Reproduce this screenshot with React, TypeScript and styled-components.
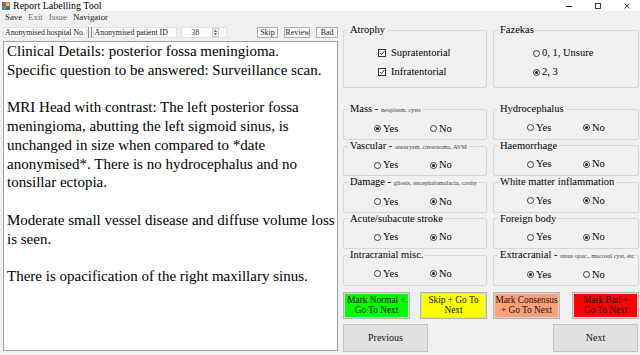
import React from 'react'
import styled, { createGlobalStyle } from 'styled-components'

const GlobalStyle = createGlobalStyle`
  html, body {
    margin: 0;
    padding: 0;
    background: #f0f0f0;
  }
  body {
    font-family: "Liberation Serif", "Times New Roman", serif;
    color: #000;
  }
`

const Window = styled.div`
  width: 640px;
  height: 355px;
  background: #f0f0f0;
  display: flex;
  flex-direction: column;
  overflow: hidden;
`

const TitleBar = styled.div`
  height: 11px;
  background: #fff;
  display: flex;
  align-items: center;
  padding-left: 2px;
`

const Title = styled.span`
  margin-left: 3px;
  font-size: 10px;
  line-height: 11px;
`

const Controls = styled.div`
  margin-left: auto;
  padding-right: 10px;
  display: flex;
  align-items: center;
  gap: 23px;
`

const MenuBar = styled.div`
  height: 12px;
  display: flex;
  align-items: center;
  gap: 6px;
  padding-left: 5px;
  font-size: 8.8px;
`

const MenuItem = styled.span<{ $muted?: boolean }>`
  color: ${p => (p.$muted ? '#6a6a6a' : '#222')};
`

const Body = styled.div`
  flex: 1;
  display: flex;
  min-height: 0;
`

const LeftColumn = styled.div`
  width: 335px;
  margin-left: 3px;
  display: flex;
  flex-direction: column;
`

const Toolbar = styled.div`
  height: 17px;
  box-sizing: border-box;
  padding-top: 4px;
  display: flex;
  align-items: flex-start;
`

const Field = styled.div<{ $w: number }>`
  width: ${p => p.$w}px;
  height: 11px;
  box-sizing: border-box;
  background: #fff;
  border: 1px solid #e2e2e2;
  font-size: 7.8px;
  line-height: 9px;
  padding-left: 1px;
  white-space: nowrap;
  overflow: hidden;
  color: #111;
`

const Divider = styled.div`
  width: 4px;
  height: 11px;
  box-sizing: border-box;
  border-left: 1px solid #8a8a8a;
  border-right: 1px solid #8a8a8a;
  margin: 0 1px;
`

const Spinner = styled.div`
  width: 46px;
  height: 11px;
  box-sizing: border-box;
  margin-left: 4px;
  background: #fff;
  border: 1px solid #e2e2e2;
  display: flex;
  align-items: center;
  font-size: 8px;
  padding-left: 9px;
  color: #333;
`

const SpinArrows = styled.div`
  margin-left: auto;
  margin-right: 7px;
  width: 7px;
  height: 9px;
  box-sizing: border-box;
  border: 1px solid #c8c8c8;
  background: #f4f4f4;
  display: flex;
`

const ToolButton = styled.div<{ $w: number; $gap: number }>`
  width: ${p => p.$w}px;
  margin-left: ${p => p.$gap}px;
  height: 11px;
  box-sizing: border-box;
  background: #fdfdfd;
  border: 1px solid #adadad;
  font-size: 8px;
  line-height: 9px;
  text-align: center;
  color: #222;
`

const ReportText = styled.div`
  margin-top: 1px;
  height: 310px;
  box-sizing: border-box;
  background: #fff;
  border: 1px solid #a0a0a0;
  padding: 0 1px 0 3px;
  font-size: 15px;
  line-height: 18.75px;
  white-space: pre-wrap;
  overflow: hidden;
`

const RightColumn = styled.div`
  width: 296px;
  margin-left: 5px;
  margin-top: 1px;
  display: flex;
  flex-direction: column;
`

const PairGrid = styled.div`
  display: grid;
  grid-template-columns: 144px 146px;
  column-gap: 6px;
`

const TopGrid = styled(PairGrid)`
  height: 64px;
`

const QuestionGrid = styled(PairGrid)`
  margin-top: 15px;
  grid-auto-rows: 36.5px;
`

const Group = styled.fieldset`
  margin: 0;
  padding: 0;
  min-width: 0;
  box-sizing: border-box;
  border: 1px solid #d6d6d6;
  border-radius: 2px;
`

const Legend = styled.legend`
  margin-left: 4px;
  padding: 0 2px;
  font-size: 10.5px;
  line-height: 12px;
  white-space: nowrap;
`

const Hint = styled.span`
  font-size: 6.3px;
  color: #444;
`

const Stack = styled.div<{ $indent: number }>`
  display: flex;
  flex-direction: column;
  gap: 7px;
  padding-left: ${p => p.$indent}px;
  margin-top: 11px;
`

const OptionRow = styled.div<{ $indent: number }>`
  display: flex;
  padding-left: ${p => p.$indent}px;
  margin-top: 6.5px;
`

const Choice = styled.div<{ $w?: number; $gap: number }>`
  display: flex;
  align-items: center;
  gap: ${p => p.$gap}px;
  width: ${p => (p.$w ? `${p.$w}px` : 'auto')};
  font-size: 10.5px;
  line-height: 12px;
  white-space: nowrap;
`

const Mark = styled.span<{ $round?: boolean; $size: number }>`
  width: ${p => p.$size}px;
  height: ${p => p.$size}px;
  box-sizing: border-box;
  flex: none;
  border: 1px solid #333;
  border-radius: ${p => (p.$round ? '50%' : '0')};
  background: #fff;
  display: inline-flex;
  align-items: center;
  justify-content: center;
`

const Dot = styled.span`
  width: 3px;
  height: 3px;
  border-radius: 50%;
  background: #1a1a1a;
`

const ActionRow = styled(PairGrid)`
  margin-top: 6px;
  height: 27px;
`

const ActionPair = styled.div`
  display: flex;
  justify-content: space-between;
`

const ActionButton = styled.div<{ $bg: string }>`
  width: 67px;
  height: 27px;
  box-sizing: border-box;
  background: ${p => p.$bg};
  border: 1px solid #b4b4b4;
  box-shadow: inset 0 0 0 1px #d4d4d4;
  font-size: 9.3px;
  line-height: 10px;
  text-align: center;
  display: flex;
  align-items: center;
  justify-content: center;
  white-space: pre;
  color: #111;
`

const NavRow = styled.div`
  margin-top: 5px;
  padding-right: 1px;
  display: flex;
  justify-content: space-between;
`

const NavButton = styled.div`
  width: 85px;
  height: 28.5px;
  box-sizing: border-box;
  background: #e1e1e1;
  border: 1px solid #c2c2c2;
  font-size: 10px;
  display: flex;
  align-items: center;
  justify-content: center;
  color: #111;
`

function AppIcon() {
  return (
    <svg width="8" height="8" viewBox="0 0 8 8">
      <rect x="0" y="0" width="8" height="8" fill="#3b6fc4" />
      <rect x="0.5" y="0.5" width="3.5" height="3.5" fill="#e0403a" />
      <rect x="4" y="0.5" width="3.5" height="3.5" fill="#f2c531" />
      <rect x="0.5" y="4" width="3.5" height="3.5" fill="#59a84a" />
    </svg>
  )
}

function WindowControls() {
  return (
    <Controls>
      <svg width="6" height="6" viewBox="0 0 6 6">
        <line x1="0" y1="3.5" x2="6" y2="3.5" stroke="#111" strokeWidth="1" />
      </svg>
      <svg width="6" height="6" viewBox="0 0 6 6">
        <rect x="0.5" y="0.5" width="5" height="5" fill="none" stroke="#111" strokeWidth="0.8" />
      </svg>
      <svg width="6" height="6" viewBox="0 0 6 6">
        <path d="M0.5 0.5 L5.5 5.5 M5.5 0.5 L0.5 5.5" stroke="#111" strokeWidth="0.8" />
      </svg>
    </Controls>
  )
}

function CheckBox({ label }: { label: string }) {
  return (
    <Choice $gap={5}>
      <Mark $size={8}>
        <svg width="6" height="6" viewBox="0 0 6 6">
          <path d="M0.8 3 L2.4 4.6 L5.3 1.2" fill="none" stroke="#111" strokeWidth="1" />
        </svg>
      </Mark>
      {label}
    </Choice>
  )
}

function Radio({ label, on, w }: { label: string; on?: boolean; w?: number }) {
  return (
    <Choice $gap={2} $w={w}>
      <Mark $round $size={7}>{on ? <Dot /> : null}</Mark>
      {label}
    </Choice>
  )
}

const report = `Clinical Details: posterior fossa meningioma.
Specific question to be answered: Surveillance scan.

MRI Head with contrast: The left posterior fossa meningioma, abutting the left sigmoid sinus, is unchanged in size when compared to *date anonymised*. There is no hydrocephalus and no tonsillar ectopia.

Moderate small vessel disease and diffuse volume loss is seen.

There is opacification of the right maxillary sinus.`

const questions = [
  { title: 'Mass', hint: 'neoplasm, cysts', yes: true },
  { title: 'Hydrocephalus', yes: false },
  { title: 'Vascular', hint: 'aneurysm, cavernoma, AVM', yes: false },
  { title: 'Haemorrhage', yes: false },
  { title: 'Damage', hint: 'gliosis, encephalomalacia, cavity', yes: false },
  { title: 'White matter inflammation', yes: false },
  { title: 'Acute/subacute stroke', yes: false },
  { title: 'Foreign body', yes: false },
  { title: 'Intracranial misc.', yes: false },
  { title: 'Extracranial', hint: 'sinus opac., mucosal cyst, etc', yes: true },
]

const actions = [
  [
    { text: 'Mark Normal +\nGo To Next', bg: '#00ff00' },
    { text: 'Skip + Go To\nNext', bg: '#ffff00' },
  ],
  [
    { text: 'Mark Consensus\n+ Go To Next', bg: '#ffa07a' },
    { text: 'Mark Bad +\nGo To Next', bg: '#ff0000' },
  ],
]

export default function App() {
  return (
    <>
      <GlobalStyle />
      <Window>
        <TitleBar>
          <AppIcon />
          <Title>Report Labelling Tool</Title>
          <WindowControls />
        </TitleBar>
        <MenuBar>
          <MenuItem>Save</MenuItem>
          <MenuItem $muted>Exit</MenuItem>
          <MenuItem $muted>Issue</MenuItem>
          <MenuItem>Navigator</MenuItem>
        </MenuBar>
        <Body>
          <LeftColumn>
            <Toolbar>
              <Field $w={85}>Anonymised hospital No.</Field>
              <Divider />
              <Field $w={86}>Anonymised patient ID</Field>
              <Spinner>
                38
                <SpinArrows>
                  <svg width="5" height="7" viewBox="0 0 5 7">
                    <path d="M2.5 0.8 L4.2 2.8 L0.8 2.8 Z M2.5 6.2 L4.2 4.2 L0.8 4.2 Z" fill="#555" />
                  </svg>
                </SpinArrows>
              </Spinner>
              <ToolButton $w={22} $gap={30}>Skip</ToolButton>
              <ToolButton $w={26} $gap={6}>Review</ToolButton>
              <ToolButton $w={22} $gap={6}>Bad</ToolButton>
            </Toolbar>
            <ReportText>{report}</ReportText>
          </LeftColumn>
          <RightColumn>
            <TopGrid>
              <Group>
                <Legend>Atrophy</Legend>
                <Stack $indent={34}>
                  <CheckBox label="Supratentorial" />
                  <CheckBox label="Infratentorial" />
                </Stack>
              </Group>
              <Group>
                <Legend>Fazekas</Legend>
                <Stack $indent={39}>
                  <Radio label="0, 1, Unsure" />
                  <Radio label="2, 3" on />
                </Stack>
              </Group>
            </TopGrid>
            <QuestionGrid>
              {questions.map((q, i) => (
                <Group key={q.title}>
                  <Legend>
                    {q.title}
                    {q.hint ? <> - <Hint>{q.hint}</Hint></> : null}
                  </Legend>
                  <OptionRow $indent={i % 2 ? 33 : 30}>
                    <Radio label="Yes" on={q.yes} w={56} />
                    <Radio label="No" on={!q.yes} />
                  </OptionRow>
                </Group>
              ))}
            </QuestionGrid>
            <ActionRow>
              {actions.map((pair, i) => (
                <ActionPair key={i}>
                  {pair.map(a => (
                    <ActionButton key={a.text} $bg={a.bg}>{a.text}</ActionButton>
                  ))}
                </ActionPair>
              ))}
            </ActionRow>
            <NavRow>
              <NavButton>Previous</NavButton>
              <NavButton>Next</NavButton>
            </NavRow>
          </RightColumn>
        </Body>
      </Window>
    </>
  )
}
